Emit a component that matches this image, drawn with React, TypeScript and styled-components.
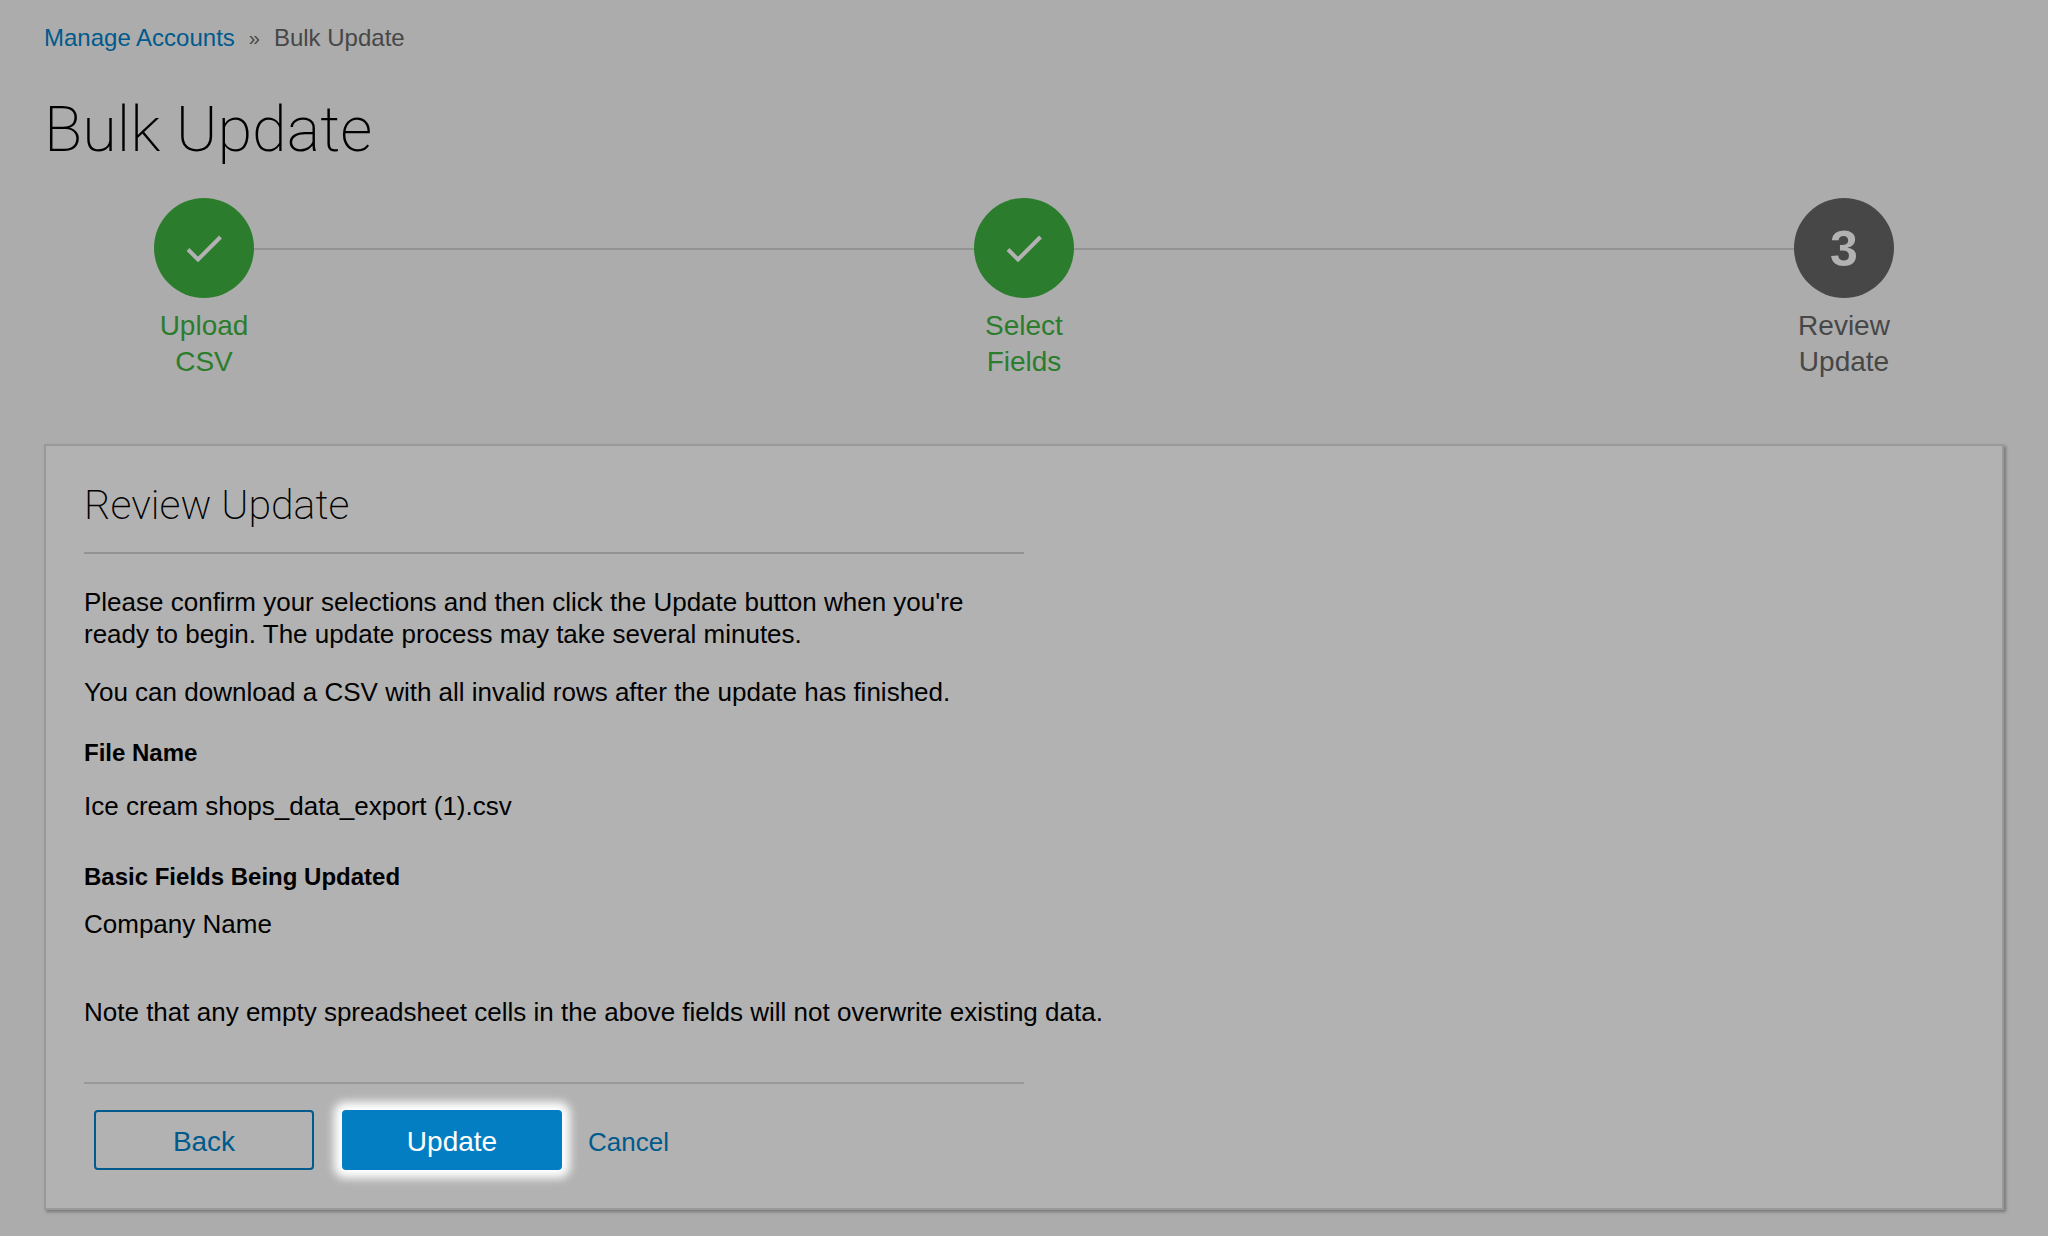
import React from "react";
import styled, { createGlobalStyle } from "styled-components";

const sans = `"Liberation Sans", Arial, Helvetica, sans-serif`;
const thin = `Roboto, "Liberation Sans", sans-serif`;

const colors = {
  page: "#acacac",
  card: "#b2b2b2",
  line: "#939393",
  border: "#999999",
  blue: "#005a8c",
  green: "#2b7d2d",
  grey: "#474747",
};

const GlobalStyle = createGlobalStyle`
  *, *::before, *::after { box-sizing: border-box; }
  body {
    margin: 0;
    background: ${colors.page};
    color: #000;
    font: 26px/32px ${sans};
  }
`;

const Page = styled.main`
  display: flex;
  flex-direction: column;
  padding: 24px 44px 20px;
`;

const Breadcrumb = styled.nav`
  display: flex;
  gap: 14px;
  font-size: 24px;
  line-height: 28px;
  color: ${colors.grey};
`;

const TextLink = styled.a`
  color: ${colors.blue};
  text-decoration: none;
`;

const Separator = styled.span`
  font-size: 20px;
`;

const PageTitle = styled.h1`
  margin: 38px 0 0;
  font: 200 63px/80px ${thin};
`;

const Steps = styled.ol`
  display: flex;
  justify-content: space-between;
  margin: 28px 0 0;
  padding: 0 60px;
  list-style: none;
  background: linear-gradient(${colors.line}, ${colors.line}) 50% 50px / calc(100% - 320px) 2px no-repeat;
`;

const Step = styled.li<{ $done: boolean }>`
  display: flex;
  flex-direction: column;
  align-items: center;
  gap: 10px;
  width: 200px;
  color: ${(p) => (p.$done ? colors.green : colors.grey)};
`;

const StepMark = styled.span`
  display: flex;
  align-items: center;
  justify-content: center;
  width: 100px;
  height: 100px;
  border-radius: 50%;
  background: currentColor;
`;

const StepNumber = styled.strong`
  padding-top: 2px;
  color: ${colors.card};
  font-size: 50px;
  line-height: 56px;
`;

const StepLabel = styled.span`
  width: 100px;
  font-size: 28px;
  line-height: 36px;
  text-align: center;
`;

const Card = styled.section`
  display: flex;
  flex-direction: column;
  margin-top: 64px;
  padding: 32px 38px 38px;
  border: 2px solid ${colors.border};
  background: ${colors.card};
  box-shadow: 2px 2px 3px #777;
`;

const Summary = styled.div`
  width: 50%;
`;

const CardTitle = styled.h2`
  margin: 0;
  padding-bottom: 20px;
  border-bottom: 2px solid ${colors.line};
  font: 200 41px/54px ${thin};
`;

const Text = styled.p<{ $top: number }>`
  margin: ${(p) => p.$top}px 0 0;
`;

const Term = styled.h3<{ $top: number }>`
  margin: ${(p) => p.$top}px 0 0;
  font-size: 24px;
  line-height: 28px;
`;

const Actions = styled.div`
  display: flex;
  align-items: center;
  width: 50%;
  margin-top: 54px;
  padding: 26px 10px 0;
  border-top: 2px solid ${colors.border};
`;

const Button = styled.button<{ $primary?: boolean }>`
  width: 220px;
  height: 60px;
  margin-right: 28px;
  padding: 4px 0 0;
  border: 2px solid ${(p) => (p.$primary ? "#047ec3" : colors.blue)};
  border-radius: 4px;
  background: ${(p) => (p.$primary ? "#047ec3" : "transparent")};
  color: ${(p) => (p.$primary ? "#fff" : colors.blue)};
  font: 28px/36px ${sans};
  box-shadow: ${(p) => (p.$primary ? "0 0 10px 8px #fff" : "none")};

  &:last-of-type {
    margin-right: 26px;
  }
`;

const CancelLink = styled(TextLink)`
  padding-top: 4px;
`;

const steps = [
  { label: "Upload CSV", done: true },
  { label: "Select Fields", done: true },
  { label: "Review Update", done: false },
];

const Check = () => (
  <svg width="36" height="28" viewBox="0 0 36 28" fill="none" aria-hidden="true">
    <path d="M2 15.5 L12 25.5 L34.5 3" stroke={colors.card} strokeWidth="4" />
  </svg>
);

export default function App() {
  return (
    <>
      <GlobalStyle />
      <Page>
        <Breadcrumb aria-label="Breadcrumb">
          <TextLink href="#accounts">Manage Accounts</TextLink>
          <Separator>»</Separator>
          <span>Bulk Update</span>
        </Breadcrumb>
        <PageTitle>Bulk Update</PageTitle>
        <Steps>
          {steps.map((step, i) => (
            <Step key={step.label} $done={step.done}>
              <StepMark>{step.done ? <Check /> : <StepNumber>{i + 1}</StepNumber>}</StepMark>
              <StepLabel>{step.label}</StepLabel>
            </Step>
          ))}
        </Steps>
        <Card>
          <Summary>
            <CardTitle>Review Update</CardTitle>
            <Text $top={32}>
              Please confirm your selections and then click the Update button when you're ready to
              begin. The update process may take several minutes.
            </Text>
            <Text $top={26}>
              You can download a CSV with all invalid rows after the update has finished.
            </Text>
            <Term $top={31}>File Name</Term>
            <Text $top={23}>Ice cream shops_data_export (1).csv</Text>
            <Term $top={41}>Basic Fields Being Updated</Term>
            <Text $top={17}>Company Name</Text>
          </Summary>
          <Text $top={56}>
            Note that any empty spreadsheet cells in the above fields will not overwrite existing
            data.
          </Text>
          <Actions>
            <Button type="button">Back</Button>
            <Button type="button" $primary>
              Update
            </Button>
            <CancelLink href="#cancel">Cancel</CancelLink>
          </Actions>
        </Card>
      </Page>
    </>
  );
}
